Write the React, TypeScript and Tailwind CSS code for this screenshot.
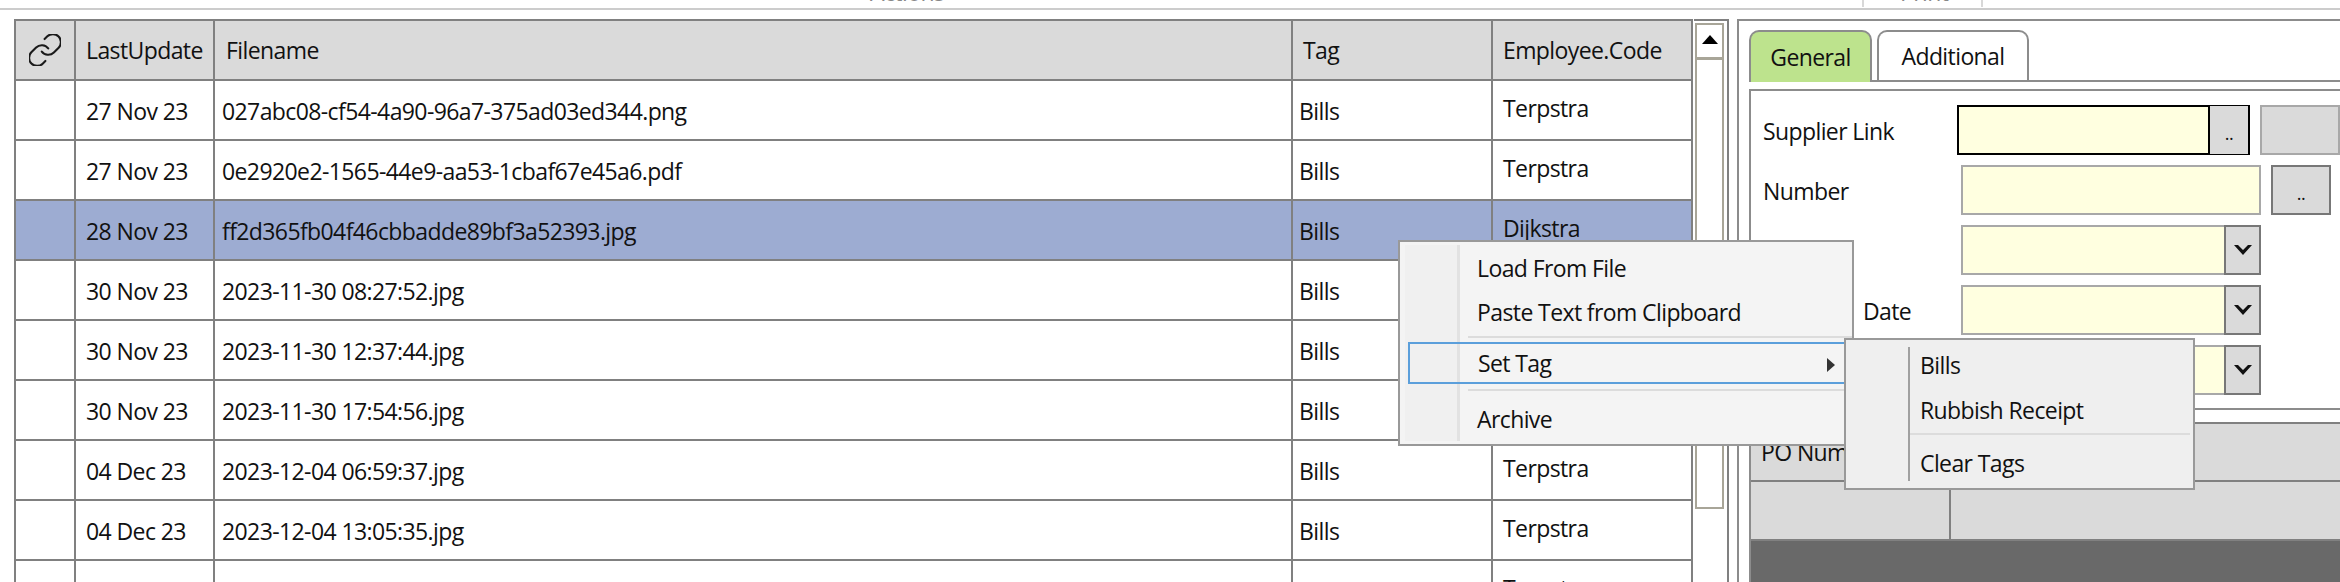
const rows = [
  { date: '27 Nov 23', file: '027abc08-cf54-4a90-96a7-375ad03ed344.png', tag: 'Bills', emp: 'Terpstra' },
  { date: '27 Nov 23', file: '0e2920e2-1565-44e9-aa53-1cbaf67e45a6.pdf', tag: 'Bills', emp: 'Terpstra' },
  { date: '28 Nov 23', file: 'ff2d365fb04f46cbbadde89bf3a52393.jpg', tag: 'Bills', emp: 'Dijkstra', selected: true },
  { date: '30 Nov 23', file: '2023-11-30 08:27:52.jpg', tag: 'Bills', emp: 'Terpstra' },
  { date: '30 Nov 23', file: '2023-11-30 12:37:44.jpg', tag: 'Bills', emp: 'Terpstra' },
  { date: '30 Nov 23', file: '2023-11-30 17:54:56.jpg', tag: 'Bills', emp: 'Terpstra' },
  { date: '04 Dec 23', file: '2023-12-04 06:59:37.jpg', tag: 'Bills', emp: 'Terpstra' },
  { date: '04 Dec 23', file: '2023-12-04 13:05:35.jpg', tag: 'Bills', emp: 'Terpstra' },
  { date: '', file: '', tag: 'Bills', emp: 'Terpstra' },
];

const cell = 'h-[60px] flex items-center border-l-2 border-b-2 border-[#808080] whitespace-nowrap overflow-hidden';

function LinkIcon() {
  return (
    <svg viewBox="2 2 20 20" className="w-[32px] h-[32px]" fill="none" stroke="#1a1a1a" strokeWidth="1.3" strokeLinecap="round" strokeLinejoin="round">
      <path d="M10 13a5 5 0 0 0 7.54.54l3-3a5 5 0 0 0-7.07-7.07l-1.72 1.71" />
      <path d="M14 11a5 5 0 0 0-7.54-.54l-3 3a5 5 0 0 0 7.07 7.07l1.71-1.71" />
    </svg>
  );
}

function Chevron() {
  return (
    <svg viewBox="0 0 18 10" className="w-[18px] h-[10px]" fill="#111">
      <polygon points="0,0 4,0 9,5 14,0 18,0 9,10" />
    </svg>
  );
}

function FileTable() {
  return (
    <div className="w-[1679px] border-t-2 border-r-2 border-[#808080] grid grid-cols-[60px_139px_1078px_200px_200px] h-[563px] content-start overflow-hidden">
      <div className={`${cell} bg-[#dadada] justify-center`}><LinkIcon /></div>
      <div className={`${cell} bg-[#dadada] pl-[10px]`}>LastUpdate</div>
      <div className={`${cell} bg-[#dadada] pl-[11px]`}>Filename</div>
      <div className={`${cell} bg-[#dadada] pl-[10px]`}>Tag</div>
      <div className={`${cell} bg-[#dadada] pl-[10px]`}>Employee.Code</div>
      {rows.map((r, i) => {
        const bg = r.selected ? 'bg-[#9dacd2]' : 'bg-white';
        return (
          <div key={i} className="contents">
            <div className={`${cell} ${bg}`} />
            <div className={`${cell} ${bg} pl-[10px] pt-[3px]`}>{r.date}</div>
            <div className={`${cell} ${bg} pl-[7px] pt-[3px]`}>{r.file}</div>
            <div className={`${cell} ${bg} pl-[6px] pt-[3px]`}>{r.tag}</div>
            <div className={`${cell} ${bg} pl-[10px] pb-[4px]`}>{r.emp}</div>
          </div>
        );
      })}
    </div>
  );
}

function ScrollColumn() {
  return (
    <div className="w-[35px] ml-px h-[563px] border-t-2 border-r-2 border-[#808080] pt-[2px] pl-[1px]">
      <div className="w-[29px] h-[34px] border-2 border-b-0 border-[#a8a598] flex justify-center pt-[10px]">
        <div className="w-0 h-0 border-l-[8px] border-r-[8px] border-b-[9px] border-l-transparent border-r-transparent border-b-black" />
      </div>
      <div className="w-[29px] h-[452px] border-2 border-t-[3px] border-[#a8a598]" />
    </div>
  );
}

function Field({ dropdown, browse }: { dropdown?: boolean; browse?: boolean }) {
  return (
    <div className={`w-[300px] h-[50px] flex bg-[#ffffe0] border-2 ${browse ? 'border-black' : 'border-[#a8a8a8]'}`}>
      <div className="flex-1" />
      {browse && (
        <div className="w-[40px] -my-px border-l-2 border-black bg-[#dadada] flex justify-center items-center pt-[5px] text-[18px] leading-none">..</div>
      )}
      {dropdown && (
        <div className="w-[37px] -my-[2px] -mr-[2px] border-2 border-[#777777] bg-[#dadada] flex justify-center items-center">
          <Chevron />
        </div>
      )}
    </div>
  );
}

function FormRow({ label, children, labelClass }: { label?: string; children: React.ReactNode; labelClass?: string }) {
  return (
    <div className="flex items-center h-[50px] mb-[10px]">
      <div className={`w-[198px] whitespace-nowrap pt-[2px] ${labelClass ?? ''}`}>{label}</div>
      {children}
    </div>
  );
}

function RightPanel() {
  return (
    <div className="flex-1 ml-[8px] h-[563px] border-t-2 border-l-2 border-[#8c8c8c] pl-[10px] pt-[9px] overflow-hidden">
      <div className="flex h-[52px] border-b-2 border-[#8c8c8c]">
        <div className="w-[123px] rounded-t-[10px] border-2 border-b-0 border-[#8c8c8c] bg-[#bde38d] flex items-center justify-center -mb-[2px]">General</div>
        <div className="w-[152px] ml-[5px] rounded-t-[10px] border-2 border-b-0 border-[#8c8c8c] bg-white flex items-center justify-center">Additional</div>
      </div>
      <div className="mt-[7px] h-[321px] border-t-2 border-l-2 border-b-2 border-[#8c8c8c] pl-[12px] pt-[14px]">
        <FormRow label="Supplier Link">
          <Field browse />
          <div className="w-[80px] h-[50px] ml-[10px] shrink-0 border-2 border-[#a8a8a8] bg-[#dadada]" />
        </FormRow>
        <FormRow label="Number">
          <Field />
          <div className="w-[60px] h-[50px] ml-[10px] shrink-0 border-2 border-[#777777] bg-[#dadada] flex justify-center items-center pt-[5px] text-[18px] leading-none">..</div>
        </FormRow>
        <FormRow><Field dropdown /></FormRow>
        <FormRow label="Date" labelClass="pl-[100px]"><Field dropdown /></FormRow>
        <FormRow><Field dropdown /></FormRow>
      </div>
      <div className="mt-[12px] border-l-2 border-[#8c8c8c] -ml-0">
        <div className="h-[60px] bg-[#dadada] border-t-2 border-b-2 border-[#808080] flex items-center pl-[10px]">PO Number</div>
        <div className="h-[59px] bg-[#dadada] border-b-2 border-[#808080] flex">
          <div className="w-[200px] border-r-2 border-[#808080]" />
        </div>
        <div className="h-[60px] bg-[#696969]" />
      </div>
    </div>
  );
}

function ContextMenu() {
  return (
    <>
      <div className="absolute left-[1398px] top-[240px] w-[456px] h-[206px] bg-[#f4f4f4] border-2 border-[#999999] z-10">
        <div className="absolute left-[5px] top-[3px] bottom-[3px] w-[55px] bg-[#f0f0f0] border-r-[3px] border-[#e2e2e2]" />
        <div className="relative h-full pl-[77px] pt-[4px]">
          <div className="h-[44px] flex items-center">Load From File</div>
          <div className="h-[44px] flex items-center">Paste Text from Clipboard</div>
          <div className="-ml-[9px] mt-[2px] h-[2px] bg-[#dcdcdc]" />
          <div className="-ml-[69px] mr-[2px] mt-[4px] h-[42px] pl-[68px] border-2 border-[#5b9fdb] flex items-center">Set Tag</div>
          <div className="-ml-[9px] mt-[5px] h-[2px] bg-[#dcdcdc]" />
          <div className="h-[56px] flex items-center">Archive</div>
        </div>
        <div className="absolute left-[427px] top-[116px] w-0 h-0 border-t-[7px] border-b-[7px] border-l-[8px] border-t-transparent border-b-transparent border-l-[#333333]" />
      </div>
      <div className="absolute left-[1844px] top-[338px] w-[351px] h-[152px] bg-[#efefef] border-2 border-[#999999] z-20">
        <div className="absolute left-[62px] top-[7px] bottom-[7px] w-[2px] bg-[#a0a0a0]" />
        <div className="pl-[74px] pt-[3px]">
          <div className="h-[45px] flex items-center">Bills</div>
          <div className="h-[45px] flex items-center">Rubbish Receipt</div>
          <div className="-ml-[12px] mr-[3px] h-[2px] bg-[#dcdcdc]" />
          <div className="h-[56px] flex items-center">Clear Tags</div>
        </div>
      </div>
    </>
  );
}

export default function App() {
  return (
    <div className="relative w-[2340px] h-[582px] overflow-hidden bg-white text-[#111111] text-[23px] tracking-[-0.6px] font-['Open_Sans',sans-serif]">
      <div className="relative h-[10px] border-b-2 border-[#cccccc] overflow-hidden text-[#888888]">
        <div className="flex h-[8px]">
          <div className="w-[870px]" />
          <div className="w-[992px] leading-none -mt-[19px]">Actions</div>
          <div className="w-[121px] h-[7px] border-l-2 border-r-2 border-[#d8d8d8] pl-[36px] leading-none"><div className="-mt-[19px]">Print</div></div>
        </div>
      </div>
      <div className="flex pt-[9px] pl-[14px]">
        <FileTable />
        <ScrollColumn />
        <RightPanel />
      </div>
      <ContextMenu />
    </div>
  );
}
